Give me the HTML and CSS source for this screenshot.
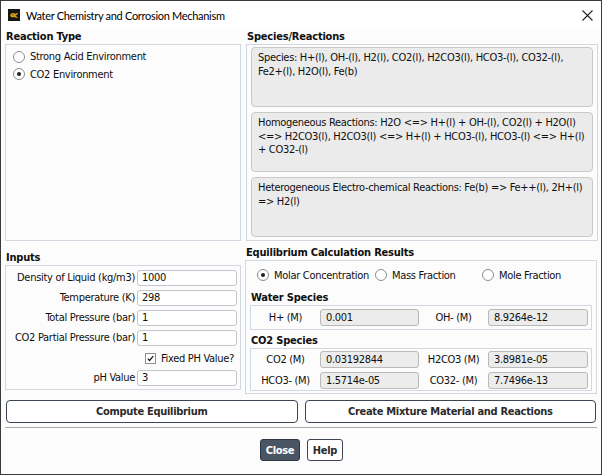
FILE: index.html
```html
<!DOCTYPE html>
<html>
<head>
<meta charset="utf-8">
<title>Water Chemistry and Corrosion Mechanism</title>
<link rel="stylesheet" href="styles.css">
</head>
<body>
<div class="window">
  <div class="titlebar">
    <svg class="app-icon" viewBox="0 0 12 12" width="12" height="12">
      <rect width="12" height="12" fill="#151515"/>
      <path d="M2 6.5 C3 4 5 3.5 6.5 4.5 C7.5 5.2 8.5 4.2 10 3.8 C9.5 5.5 8.5 6.5 7 6.8 C8.5 7.2 9.5 8 10 9 C8 8.8 6.5 8.5 5.5 8 C4.5 8.6 3 8.6 2 6.5 Z" fill="#d9a21b"/>
      <path d="M3.5 6.3 C4.5 5.5 5.5 5.6 6.2 6.3" stroke="#7a4f08" stroke-width="0.8" fill="none"/>
    </svg>
    <span class="title">Water Chemistry and Corrosion Mechanism</span>
    <svg class="close-x" viewBox="0 0 11 11" width="11" height="11">
      <path d="M0.5 0.5 L10.5 10.5 M10.5 0.5 L0.5 10.5" stroke="#222" stroke-width="1.1" fill="none"/>
    </svg>
  </div>

  <div class="content">
    <div class="row-top">
      <section class="col">
        <div class="heading">Reaction Type</div>
        <div class="group reaction-group">
          <label class="radio-item"><span class="radio"></span>Strong Acid Environment</label>
          <label class="radio-item"><span class="radio checked"></span>CO2 Environment</label>
        </div>
      </section>
      <section class="col">
        <div class="heading">Species/Reactions</div>
        <div class="group species-group">
          <div class="species-box">Species: H+(l), OH-(l), H2(l), CO2(l), H2CO3(l), HCO3-(l), CO32-(l), Fe2+(l), H2O(l), Fe(b)</div>
          <div class="species-box">Homogeneous Reactions: H2O &lt;=&gt; H+(l) + OH-(l), CO2(l) + H2O(l) &lt;=&gt; H2CO3(l), H2CO3(l) &lt;=&gt; H+(l) + HCO3-(l), HCO3-(l) &lt;=&gt; H+(l) + CO32-(l)</div>
          <div class="species-box">Heterogeneous Electro-chemical Reactions: Fe(b) =&gt; Fe++(l), 2H+(l) =&gt; H2(l)</div>
        </div>
      </section>
    </div>

    <div class="row-bottom">
      <section class="col col-inputs">
        <div class="heading">Inputs</div>
        <div class="group inputs-group">
          <span class="in-label">Density of Liquid (kg/m3)</span><span class="entry">1000</span>
          <span class="in-label">Temperature (K)</span><span class="entry">298</span>
          <span class="in-label">Total Pressure (bar)</span><span class="entry">1</span>
          <span class="in-label">CO2 Partial Pressure (bar)</span><span class="entry">1</span>
          <label class="check-row"><span class="checkbox"><svg viewBox="0 0 11 11" width="11" height="11"><path d="M2.2 5.6 L4.4 7.9 L8.8 2.6" stroke="#1a1a1a" stroke-width="1.6" fill="none"/></svg></span>Fixed PH Value?</label>
          <span class="in-label">pH Value</span><span class="entry">3</span>
        </div>
      </section>
      <section class="col">
        <div class="heading">Equilibrium Calculation Results</div>
        <div class="group eq-group">
          <div class="radio-row">
            <label class="radio-item"><span class="radio checked"></span>Molar Concentration</label>
            <label class="radio-item"><span class="radio"></span>Mass Fraction</label>
            <label class="radio-item"><span class="radio"></span>Mole Fraction</label>
          </div>
          <div class="sub-heading">Water Species</div>
          <div class="subgroup water">
            <span class="res-label">H+ (M)</span><span class="result">0.001</span>
            <span class="res-label">OH- (M)</span><span class="result">8.9264e-12</span>
          </div>
          <div class="sub-heading sub-heading-2">CO2 Species</div>
          <div class="subgroup co2">
            <span class="res-label">CO2 (M)</span><span class="result">0.03192844</span>
            <span class="res-label">H2CO3 (M)</span><span class="result">3.8981e-05</span>
            <span class="res-label">HCO3- (M)</span><span class="result">1.5714e-05</span>
            <span class="res-label">CO32- (M)</span><span class="result">7.7496e-13</span>
          </div>
        </div>
      </section>
    </div>

    <div class="actions">
      <button class="btn">Compute Equilibrium</button>
      <button class="btn">Create Mixture Material and Reactions</button>
    </div>
    <div class="separator"></div>
    <div class="footer">
      <button class="btn btn-primary">Close</button>
      <button class="btn btn-small">Help</button>
    </div>
  </div>
</div>
</body>
</html>
```

FILE: styles.css
```css
* { box-sizing: border-box; }
html, body { margin: 0; padding: 0; }
body {
  width: 602px;
  height: 475px;
  background: #fcfcfc;
  font-family: "DejaVu Sans Condensed", "DejaVu Sans", sans-serif;
  font-stretch: condensed;
  font-size: 11px;
  letter-spacing: -0.3px;
  color: #0f0f0f;
}
.window {
  width: 602px;
  height: 475px;
  border: 1px solid #3a3a3a;
  background: #fcfcfc;
  display: flex;
  flex-direction: column;
}
.titlebar {
  height: 28px;
  flex: none;
  display: flex;
  align-items: center;
  padding: 0 7px 0 7px;
  background: #fff;
}
.app-icon { margin-right: 6px; flex: none; }
.title {
  flex: 1;
  font-family: "Lato", "Noto Sans", sans-serif;
  font-stretch: normal;
  font-size: 11px;
  letter-spacing: -0.3px;
  color: #000;
}
.close-x { flex: none; margin-right: 1px; }

.content {
  flex: 1;
  display: flex;
  flex-direction: column;
  padding: 0 4px;
}
.heading {
  font-weight: bold;
  line-height: 15px;
  height: 15px;
  padding-left: 1px;
  white-space: nowrap;
  letter-spacing: -0.2px;
}
.group { border: 1px solid #d2d8e2; }

.row-top {
  display: grid;
  grid-template-columns: 236px 352px;
  column-gap: 5px;
}
.col { display: flex; flex-direction: column; }
.reaction-group {
  height: 197px;
  padding: 3px 7px;
  display: flex;
  flex-direction: column;
}
.radio-item {
  display: flex;
  align-items: center;
  height: 17.5px;
  white-space: nowrap;
}
.radio {
  width: 12px;
  height: 12px;
  border: 1px solid #8e8e8e;
  border-radius: 50%;
  background: #fff;
  margin-right: 5px;
  flex: none;
  display: flex;
  align-items: center;
  justify-content: center;
}
.radio.checked::after {
  content: "";
  width: 4px;
  height: 4px;
  border-radius: 50%;
  background: #222;
}
.species-group {
  height: 197px;
  padding: 2px 4px 3px 4px;
  display: flex;
  flex-direction: column;
  gap: 5px;
}
.species-box {
  flex: 1;
  background: #ebebeb;
  border: 1px solid #c9c9c9;
  border-radius: 4px;
  padding: 3px 6px 0 6px;
  line-height: 13.5px;
}

.row-bottom {
  display: grid;
  grid-template-columns: 236px 352px;
  column-gap: 4px;
  margin-top: 4px;
}
.col-inputs { padding-top: 5px; }
.inputs-group {
  display: grid;
  grid-template-columns: 1fr 100px;
  column-gap: 2px;
  row-gap: 4px;
  grid-auto-rows: 16px;
  padding: 4px 3px 3px 3px;
  height: 125px;
}
.in-label {
  text-align: right;
  line-height: 16px;
  white-space: nowrap;
}
.entry, .result {
  height: 16px;
  line-height: 14px;
  border: 1px solid #c3c6cc;
  border-radius: 3px;
  background: #fff;
  padding-left: 4px;
}
.check-row {
  grid-column: 1 / span 2;
  display: flex;
  align-items: center;
  justify-content: flex-end;
  padding-right: 3px;
  white-space: nowrap;
}
.checkbox {
  width: 11px;
  height: 11px;
  border: 1px solid #8e8e8e;
  background: #fff;
  margin-right: 5px;
  display: flex;
  align-items: center;
  justify-content: center;
}
.checkbox svg { display: block; width: 9px; height: 9px; }

.eq-group {
  height: 134px;
  padding: 5px 4px 2px 4px;
  display: flex;
  flex-direction: column;
}
.radio-row {
  display: grid;
  grid-template-columns: 118px 107px 1fr;
  padding-left: 7px;
  height: 18px;
  align-items: center;
}
.sub-heading {
  font-weight: bold;
  line-height: 14px;
  height: 14px;
  margin-top: 7px;
  padding-left: 1px;
  letter-spacing: -0.2px;
}
.sub-heading-2 { margin-top: 4px; }
.subgroup {
  border: 1px solid #d2d8e2;
  display: grid;
  grid-template-columns: 69px 99px 69px 100px;
  align-items: center;
}
.subgroup.water {
  height: 25px;
  padding: 3px 0;
  grid-auto-rows: 17px;
}
.subgroup.co2 {
  height: 43px;
  padding: 2px 0 1px 0;
  grid-auto-rows: 17px;
  row-gap: 4px;
}
.res-label { text-align: center; white-space: nowrap; }
.result {
  height: 17px;
  line-height: 15px;
  background: #ececec;
  border-color: #b9b9b9;
  padding-left: 5px;
}

.actions {
  display: grid;
  grid-template-columns: 1fr 1fr;
  column-gap: 7px;
  margin: 6px 1px 0 1px;
}
.btn {
  font-family: inherit;
  font-stretch: condensed;
  font-size: 11px;
  font-weight: bold;
  letter-spacing: -0.3px;
  color: #2b2b2b;
  background: #fff;
  border: 1px solid #3b4554;
  border-radius: 4px;
  height: 23px;
  padding: 0;
}
.separator {
  height: 1px;
  background: #a9a9a9;
  margin-top: 4px;
}
.footer {
  display: flex;
  justify-content: center;
  gap: 7px;
  margin-top: 11px;
  padding-left: 1px;
}
.footer .btn { height: 22px; border-radius: 3px; }
.btn-primary {
  width: 40px;
  background: #4a5564;
  border-color: #2e3845;
  color: #fff;
}
.btn-small { width: 36px; }
```
